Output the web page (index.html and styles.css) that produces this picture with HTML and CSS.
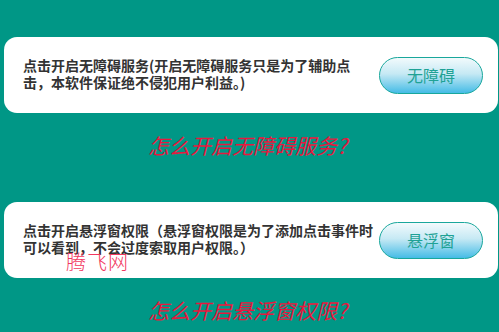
FILE: index.html
```html
<!DOCTYPE html>
<html lang="zh">
<head>
<meta charset="utf-8">
<link rel="stylesheet" href="styles.css">
</head>
<body>
<div class="page">
  <div class="card">
    <p class="desc">点击开启无障碍服务(开启无障碍服务只是为了辅助点击，本软件保证绝不侵犯用户利益。)</p>
    <div class="btn">无障碍</div>
  </div>
  <p class="question">怎么开启无障碍服务?</p>
  <div class="card card-wm">
    <p class="desc">点击开启悬浮窗权限（悬浮窗权限是为了添加点击事件时可以看到，不会过度索取用户权限。）</p>
    <div class="btn">悬浮窗</div>
    <span class="watermark">腾飞网</span>
  </div>
  <p class="question">怎么开启悬浮窗权限?</p>
</div>
</body>
</html>
```

FILE: styles.css
```css
html, body {
  margin: 0;
  padding: 0;
  background: #009786;
  width: 499px;
  height: 332px;
  overflow: hidden;
}
.page {
  padding-top: 37px;
  display: flex;
  flex-direction: column;
  font-family: "Noto Sans CJK SC", "Noto Sans", sans-serif;
}
.card {
  margin: 0 1px 0 4px;
  height: 76px;
  box-sizing: border-box;
  background: #ffffff;
  border-radius: 13px;
  display: flex;
  align-items: center;
  padding: 0 17px 0 19px;
}
.card-wm {
  position: relative;
}
.desc {
  margin: 0;
  width: 355px;
  flex: none;
  font-size: 14px;
  line-height: 17px;
  font-weight: 700;
  color: #333333;
  padding-bottom: 3px;
}
.btn {
  flex: none;
  width: 104px;
  height: 37px;
  box-sizing: border-box;
  border: 1px solid #19a79c;
  border-radius: 19px;
  background: linear-gradient(to bottom, #f2fafc 0%, #c6e9f4 45%, #45bce6 100%);
  color: #1fa295;
  font-size: 16px;
  line-height: 35px;
  text-align: center;
  margin-left: 1px;
}
.question {
  margin: 20px 0 0 0;
  height: 24px;
  line-height: 24px;
  text-align: center;
  font-size: 21px;
  font-style: italic;
  color: #e6173e;
  padding-right: 4px;
}
.question:nth-of-type(1) {
  margin-bottom: 45px;
}
.watermark {
  position: absolute;
  left: 62px;
  top: 48px;
  font-size: 20px;
  line-height: 24px;
  font-weight: 200;
  color: #f2385f;
  letter-spacing: 1px;
}
```
